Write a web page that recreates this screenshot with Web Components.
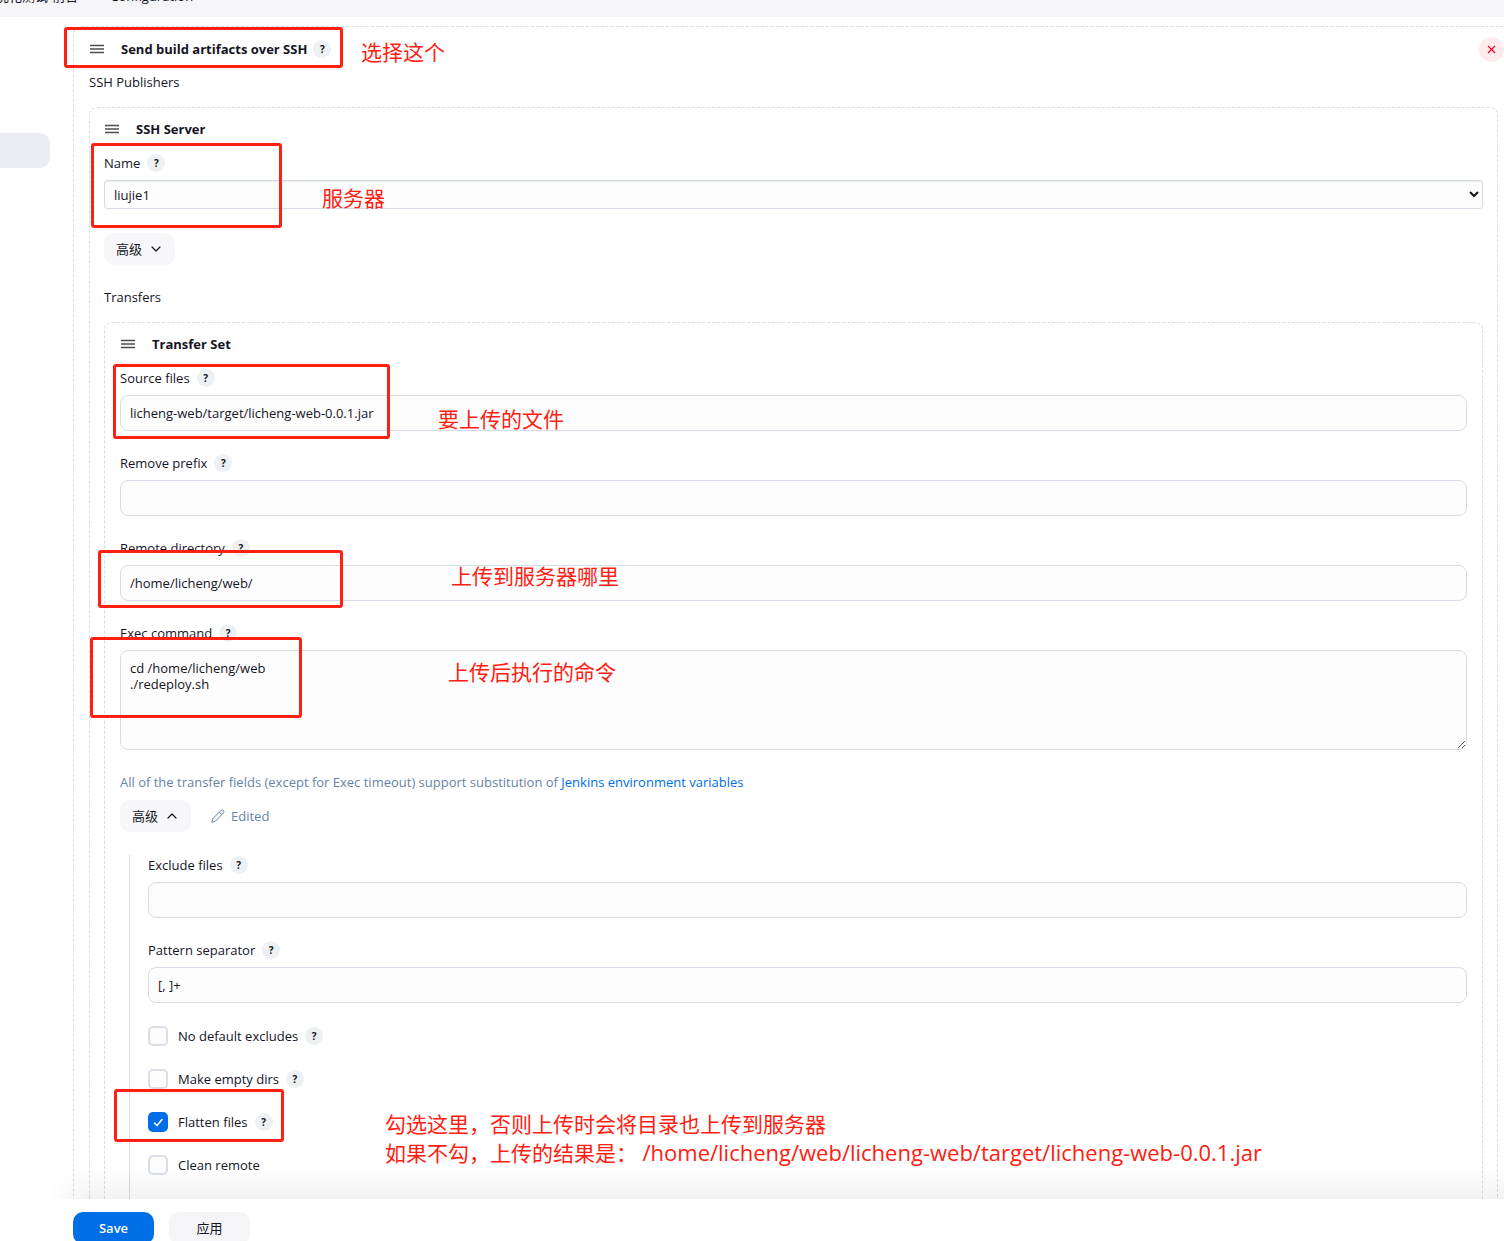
<!DOCTYPE html>
<html lang="zh-CN">
<head>
<meta charset="utf-8">
<title>Configuration</title>
<style>
  html, body {
    margin: 0;
    height: 100%;
  }

  body {
    --text: #14141f;
    --muted: #6384a8;
    --accent: #006ee6;
    --border: #d5dce8;
    --field: #fdfdfd;
    --button: #f7f7fa;
    --note: #ff2012;

    position: relative;
    overflow: hidden;
    color: var(--text);
    background: #fff;
    font: 13px/20px "Open Sans", "Noto Sans", "Noto Sans CJK SC", sans-serif;
  }

  .path {
    font-size: 22px;
  }
</style>
</head>
<body>
<config-page>
  <bread-crumbs slot="header"></bread-crumbs>
  <side-panel slot="side"></side-panel>

  <repeat-box heading="Send build artifacts over SSH" help closable edge>
    <section-label>SSH Publishers</section-label>
    <repeat-box heading="SSH Server" tight>
      <form-field label="Name" kind="select" value="liujie1" help></form-field>
      <advanced-button></advanced-button>
      <section-label>Transfers</section-label>
      <repeat-box heading="Transfer Set">
        <form-field label="Source files" value="licheng-web/target/licheng-web-0.0.1.jar" help></form-field>
        <form-field label="Remove prefix" help></form-field>
        <form-field label="Remote directory" value="/home/licheng/web/" help></form-field>
        <form-field label="Exec command" kind="textarea" value="cd /home/licheng/web&#10;./redeploy.sh" help></form-field>
        <field-hint>All of the transfer fields (except for Exec timeout) support substitution of <a href="#env">Jenkins environment variables</a></field-hint>
        <advanced-button open edited></advanced-button>
        <advanced-body>
          <form-field label="Exclude files" help></form-field>
          <form-field label="Pattern separator" value="[, ]+" help></form-field>
          <check-field label="No default excludes" help></check-field>
          <check-field label="Make empty dirs" help></check-field>
          <check-field label="Flatten files" checked help></check-field>
          <check-field label="Clean remote"></check-field>
        </advanced-body>
      </repeat-box>
    </repeat-box>
  </repeat-box>

  <action-bar slot="footer"></action-bar>
</config-page>

<note-layer>
  <note-frame x="64" y="27" w="279" h="41"></note-frame>
  <note-frame x="91" y="143" w="191" h="85"></note-frame>
  <note-frame x="113" y="364" w="277" h="75"></note-frame>
  <note-frame x="98" y="550" w="245" h="58"></note-frame>
  <note-frame x="90" y="637" w="212" h="81"></note-frame>
  <note-frame x="114" y="1089" w="170" h="53"></note-frame>
  <note-text x="361" y="38">选择这个</note-text>
  <note-text x="322" y="184">服务器</note-text>
  <note-text x="438" y="405">要上传的文件</note-text>
  <note-text x="451" y="562">上传到服务器哪里</note-text>
  <note-text x="448" y="658">上传后执行的命令</note-text>
  <note-text x="385" y="1110">勾选这里，否则上传时会将目录也上传到服务器<br>如果不勾，上传的结果是： <span class="path">/home/licheng/web/licheng-web/target/licheng-web-0.0.1.jar</span></note-text>
</note-layer>

<script>
  class BaseElement extends HTMLElement {
    constructor() {
      super();
      this.attachShadow({ mode: 'open' });
    }

    connectedCallback() {
      this.shadowRoot.innerHTML = this.render();
    }

    attr(name) {
      return this.getAttribute(name) || '';
    }
  }

  class ConfigPage extends BaseElement {
    render() {
      return `
        <style>
          :host {
            display: flex;
            flex-direction: column;
            height: 100%;
          }

          .columns {
            flex: 1;
            min-height: 0;
            display: grid;
            grid-template-columns: 73px minmax(0, 1fr);
            overflow: hidden;
          }

          main {
            padding-top: 9px;
          }
        </style>
        <slot name="header"></slot>
        <div class="columns">
          <slot name="side"></slot>
          <main><slot></slot></main>
        </div>
        <slot name="footer"></slot>
      `;
    }
  }

  class BreadCrumbs extends BaseElement {
    render() {
      return `
        <style>
          :host {
            display: block;
            flex: none;
            height: 17px;
            overflow: hidden;
            background: #f5f5f8;
          }

          nav {
            display: flex;
            align-items: center;
            gap: 12px;
            height: 20px;
            margin: -14px 0 0 -4px;
          }

          a {
            color: inherit;
            text-decoration: none;
            white-space: nowrap;
          }

          svg {
            width: 8px;
            height: 12px;
            fill: none;
            stroke: var(--muted);
          }
        </style>
        <nav>
          <a href="#job">优化测试-前台</a>
          <svg viewBox="0 0 8 12"><path d="M2 2l4 4-4 4"/></svg>
          <a href="#configure">Configuration</a>
        </nav>
      `;
    }
  }

  class SidePanel extends BaseElement {
    render() {
      return `
        <style>
          :host {
            display: block;
            padding-top: 116px;
          }

          a {
            display: block;
            width: 50px;
            height: 35px;
            border-radius: 0 10px 10px 0;
            background: #ecedf2;
          }
        </style>
        <a href="#section" aria-label="Section"></a>
      `;
    }
  }

  class HelpButton extends BaseElement {
    render() {
      return `
        <style>
          :host {
            display: inline-flex;
          }

          button {
            display: flex;
            align-items: center;
            justify-content: center;
            width: 18px;
            height: 18px;
            padding: 0;
            border: 0;
            border-radius: 50%;
            background: #edf1f4;
            color: var(--text);
            font: inherit;
            font-size: 10px;
            font-weight: 700;
          }
        </style>
        <button type="button">?</button>
      `;
    }
  }

  class RepeatBox extends BaseElement {
    render() {
      return `
        <style>
          :host {
            display: block;
            border: 1px dashed #d9dce4;
            border-radius: 8px;
            padding: 0 15px 15px;
          }

          :host([tight]) {
            padding: 0 14px 15px;
          }

          :host([edge]) {
            border-right: 0;
            border-radius: 8px 0 0 0;
            padding-right: 0;
          }

          :host([edge]) .body {
            padding-right: 6px;
          }

          header {
            display: flex;
            align-items: center;
            gap: 6px;
            height: 42px;
            margin-bottom: 3px;
            padding-left: 1px;
          }

          :host([edge]) header {
            height: 44px;
            margin-bottom: 1px;
          }

          .handle {
            width: 14px;
            height: 10px;
            margin-right: 11px;
            stroke: #4d4d57;
          }

          .close {
            display: flex;
            align-items: center;
            justify-content: center;
            width: 25px;
            height: 25px;
            margin-left: auto;
            padding: 0;
            border: 0;
            border-radius: 50%;
            background: #fdebed;
          }

          .close svg {
            width: 9px;
            height: 9px;
            stroke: #e6002e;
            stroke-width: 1.2;
          }
        </style>
        <header>
          <svg class="handle" viewBox="0 0 14 10"><path d="M0 1.5h14M0 5h14M0 8.5h14" stroke-width="1.7"/></svg>
          <b>${this.attr('heading')}</b>
          ${this.hasAttribute('help') ? '<help-button></help-button>' : ''}
          ${this.hasAttribute('closable') ? `
            <button class="close" type="button" aria-label="Delete">
              <svg viewBox="0 0 9 9"><path d="M1 1l7 7M8 1l-7 7"/></svg>
            </button>` : ''}
        </header>
        <div class="body"><slot></slot></div>
      `;
    }
  }

  class SectionLabel extends BaseElement {
    render() {
      return `
        <style>
          :host {
            display: block;
            margin-bottom: 15px;
          }
        </style>
        <slot></slot>
      `;
    }
  }

  class FormField extends BaseElement {
    control() {
      const value = this.attr('value');
      switch (this.attr('kind')) {
        case 'select':
          return `<select id="control"><option>${value}</option></select>`;
        case 'textarea':
          return `<textarea id="control">${value}</textarea>`;
        default:
          return `<input id="control" type="text" value="${value}">`;
      }
    }

    render() {
      return `
        <style>
          :host {
            display: block;
            margin-bottom: 22px;
          }

          .label {
            display: flex;
            align-items: center;
            gap: 7px;
            height: 20px;
            margin-bottom: 7px;
          }

          input, select, textarea {
            display: block;
            box-sizing: border-box;
            width: 100%;
            height: 36px;
            margin: 0;
            padding: 0 9px;
            border: 1px solid var(--border);
            border-radius: 8px;
            background: var(--field);
            color: inherit;
            font: inherit;
          }

          select {
            height: 29px;
            padding: 0 5px;
            border-radius: 3px;
            box-shadow: inset 0 1px 1px #e9edf3;
          }

          textarea {
            height: 100px;
            padding: 9px;
            line-height: 16px;
            resize: vertical;
          }
        </style>
        <div class="label">
          <label for="control">${this.attr('label')}</label>
          ${this.hasAttribute('help') ? '<help-button></help-button>' : ''}
        </div>
        ${this.control()}
      `;
    }
  }

  class CheckField extends BaseElement {
    render() {
      return `
        <style>
          :host {
            display: flex;
            align-items: center;
            gap: 7px;
            height: 20px;
            margin: 23px 0;
          }

          input {
            appearance: none;
            box-sizing: border-box;
            width: 20px;
            height: 20px;
            margin: 0;
            border: 2px solid #d9dee9;
            border-radius: 5px;
            background: var(--field);
          }

          input:checked {
            border: 0;
            background: var(--accent);
          }

          .box {
            display: grid;
            margin-right: 3px;
          }

          .box > * {
            grid-area: 1 / 1;
          }

          svg {
            width: 20px;
            height: 20px;
            fill: none;
            stroke: #fff;
            stroke-width: 1.6;
            stroke-linecap: round;
            stroke-linejoin: round;
            pointer-events: none;
          }
        </style>
        <span class="box">
          <input id="control" type="checkbox" ${this.hasAttribute('checked') ? 'checked' : ''}>
          ${this.hasAttribute('checked') ? '<svg viewBox="0 0 20 20"><path d="M6.5 11l2.5 2.5 5-6"/></svg>' : ''}
        </span>
        <label for="control">${this.attr('label')}</label>
        ${this.hasAttribute('help') ? '<help-button></help-button>' : ''}
      `;
    }
  }

  class AdvancedButton extends BaseElement {
    render() {
      const open = this.hasAttribute('open');
      return `
        <style>
          :host {
            display: flex;
            align-items: center;
            gap: 20px;
            margin: 24px 0 22px;
          }

          :host([open]) {
            margin: 8px 0 23px;
          }

          button {
            display: flex;
            align-items: center;
            gap: 8px;
            height: 32px;
            padding: 0 13px 0 12px;
            border: 0;
            border-radius: 10px;
            background: var(--button);
            color: inherit;
            font: inherit;
          }

          svg {
            fill: none;
            stroke: currentColor;
            stroke-linecap: round;
            stroke-linejoin: round;
          }

          .chevron {
            width: 12px;
            height: 12px;
            stroke-width: 1.2;
          }

          .edited {
            display: flex;
            align-items: center;
            gap: 6px;
            color: var(--muted);
          }

          .pencil {
            width: 14px;
            height: 14px;
          }
        </style>
        <button type="button">
          高级
          <svg class="chevron" viewBox="0 0 12 12"><path d="${open ? 'M2 8l4-4 4 4' : 'M2 4l4 4 4-4'}"/></svg>
        </button>
        ${this.hasAttribute('edited') ? `
          <span class="edited">
            <svg class="pencil" viewBox="0 0 14 14"><path d="M1 13l1-3.6 7.9-7.9a1.6 1.6 0 0 1 2.5 2.5L4.5 12zM8.3 3.1l2.6 2.6"/></svg>
            Edited
          </span>` : ''}
      `;
    }
  }

  class AdvancedBody extends BaseElement {
    render() {
      return `
        <style>
          :host {
            display: block;
            margin-left: 9px;
            padding: 0 0 60px 18px;
            border-left: 1px solid var(--border);
          }
        </style>
        <slot></slot>
      `;
    }
  }

  class FieldHint extends BaseElement {
    render() {
      return `
        <style>
          :host {
            display: block;
            color: var(--muted);
          }

          ::slotted(a) {
            color: var(--accent);
            text-decoration: none;
          }
        </style>
        <slot></slot>
      `;
    }
  }

  class ActionBar extends BaseElement {
    render() {
      return `
        <style>
          :host {
            position: relative;
            display: flex;
            flex: none;
            gap: 15px;
            box-sizing: border-box;
            height: 42px;
            padding: 13px 0 0 73px;
            background: #fff;
          }

          /* soft shade cast on the form above the bar */
          :host::before {
            content: "";
            position: absolute;
            inset: -32px 0 100% 50px;
            background: linear-gradient(transparent, rgba(0, 0, 0, 0.05));
            -webkit-mask: linear-gradient(90deg, transparent, #000 40px);
            mask: linear-gradient(90deg, transparent, #000 40px);
          }

          button {
            width: 81px;
            height: 32px;
            padding: 0;
            border: 0;
            border-radius: 10px;
            background: #f5f5f8;
            color: inherit;
            font: inherit;
          }

          .primary {
            background: var(--accent);
            color: #fff;
            font-weight: 600;
          }
        </style>
        <button class="primary" type="submit">Save</button>
        <button type="button">应用</button>
      `;
    }
  }

  // Free canvas over the page: red frames and captions
  class NoteLayer extends BaseElement {
    render() {
      return `
        <style>
          :host {
            position: absolute;
            inset: 0;
            overflow: hidden;
            pointer-events: none;
            color: var(--note);
          }
        </style>
        <slot></slot>
      `;
    }
  }

  class NoteFrame extends BaseElement {
    render() {
      return `
        <style>
          :host {
            position: absolute;
            left: ${this.attr('x')}px;
            top: ${this.attr('y')}px;
            width: ${this.attr('w')}px;
            height: ${this.attr('h')}px;
            box-sizing: border-box;
            border: 3px solid var(--note);
            border-radius: 3px;
          }
        </style>
      `;
    }
  }

  class NoteText extends BaseElement {
    render() {
      return `
        <style>
          :host {
            position: absolute;
            left: ${this.attr('x')}px;
            top: ${this.attr('y')}px;
            font-size: 21px;
            line-height: 28px;
            white-space: nowrap;
          }
        </style>
        <slot></slot>
      `;
    }
  }

  customElements.define('config-page', ConfigPage);
  customElements.define('bread-crumbs', BreadCrumbs);
  customElements.define('side-panel', SidePanel);
  customElements.define('help-button', HelpButton);
  customElements.define('repeat-box', RepeatBox);
  customElements.define('section-label', SectionLabel);
  customElements.define('form-field', FormField);
  customElements.define('check-field', CheckField);
  customElements.define('advanced-button', AdvancedButton);
  customElements.define('advanced-body', AdvancedBody);
  customElements.define('field-hint', FieldHint);
  customElements.define('action-bar', ActionBar);
  customElements.define('note-layer', NoteLayer);
  customElements.define('note-frame', NoteFrame);
  customElements.define('note-text', NoteText);
</script>
</body>
</html>
